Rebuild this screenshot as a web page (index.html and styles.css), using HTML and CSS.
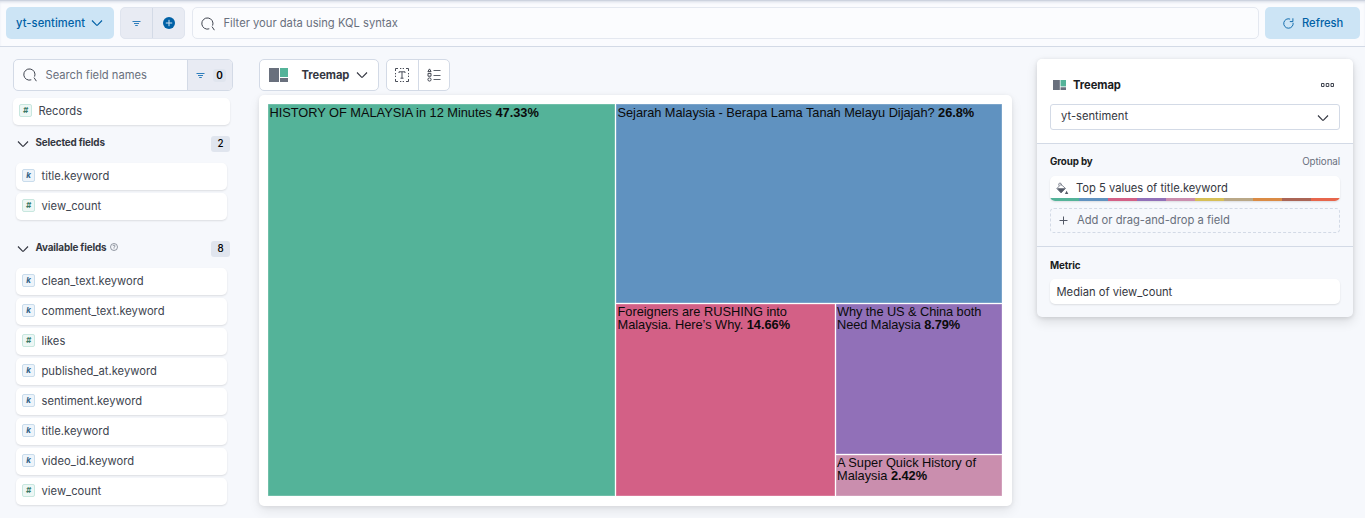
FILE: index.html
```html
<!DOCTYPE html>
<html lang="en">
<head>
<meta charset="utf-8">
<title>Lens</title>
<link rel="stylesheet" href="styles.css">
</head>
<body>
<svg class="defs" aria-hidden="true">
  <symbol id="chev" viewBox="0 0 12 8"><path d="M1 1.5 5.5 6.1Q6 6.5 6.5 6.1L11 1.5" fill="none" stroke="currentColor" stroke-width="1.15"/></symbol>
  <symbol id="search" viewBox="0 0 14 14"><path d="M8.3 11.8A5.6 5.6 0 1 1 11.6 8.6M11 9.6 13.4 13.2" fill="none" stroke="currentColor" stroke-width="1"/></symbol>
  <symbol id="filter" viewBox="0 0 9 7"><path d="M.5 1.5H8.5M2 3.5H7M3.2 5.5H5.8" fill="none" stroke="currentColor" stroke-width=".95"/></symbol>
  <symbol id="treemap" viewBox="0 0 19 14"><path d="M0 0H10V14H0ZM11 10H19V14H11Z" fill="#69707d"/><path d="M11 0H19V9H11Z" fill="#54b399"/></symbol>
</svg>

<header class="topbar">
  <button class="btn view"><span>yt-sentiment</span><svg class="chev"><use href="#chev"/></svg></button>
  <div class="filters">
    <span class="seg"><svg class="filter"><use href="#filter"/></svg></span>
    <span class="seg"><svg width="12" height="12" viewBox="0 0 12 12"><circle cx="6" cy="6" r="6" fill="#0061a6"/><path d="M6 2.8V9.2M2.8 6H9.2" stroke="#d3e2f0" stroke-width="1"/></svg></span>
  </div>
  <div class="query"><svg class="search"><use href="#search"/></svg><span>Filter your data using KQL syntax</span></div>
  <button class="btn refresh"><svg width="11" height="11" viewBox="0 0 11 11"><path d="M7.1 1.1A4.7 4.7 0 1 0 10.1 4.8M6.8 3.6H9.9V.3" fill="none" stroke="currentColor" stroke-width=".9"/></svg><span>Refresh</span></button>
</header>

<div class="main">
  <aside class="sidebar">
    <div class="field-search">
      <div class="field-input"><svg class="search"><use href="#search"/></svg><span>Search field names</span></div>
      <div class="field-filter"><svg class="filter"><use href="#filter"/></svg><b class="count">0</b></div>
    </div>
    <div class="field records"><i class="tok num">#</i><span>Records</span></div>

    <div class="group-head"><svg class="chev"><use href="#chev"/></svg><h2>Selected fields</h2><span class="badge">2</span></div>
    <div class="fields">
      <div class="field"><i class="tok">k</i><span>title.keyword</span></div>
      <div class="field"><i class="tok num">#</i><span>view_count</span></div>
    </div>

    <div class="group-head second"><svg class="chev"><use href="#chev"/></svg><h2>Available fields</h2><svg class="help" width="8" height="8" viewBox="0 0 8 8"><circle cx="4" cy="4" r="3.5"/><path d="M2.9 3.1Q3 2.1 4 2.1T5.1 3.1Q5 3.8 4 4.1V4.8M4 5.4V6.1"/></svg><span class="badge">8</span></div>
    <div class="fields">
      <div class="field"><i class="tok">k</i><span>clean_text.keyword</span></div>
      <div class="field"><i class="tok">k</i><span>comment_text.keyword</span></div>
      <div class="field"><i class="tok num">#</i><span>likes</span></div>
      <div class="field"><i class="tok">k</i><span>published_at.keyword</span></div>
      <div class="field"><i class="tok">k</i><span>sentiment.keyword</span></div>
      <div class="field"><i class="tok">k</i><span>title.keyword</span></div>
      <div class="field"><i class="tok">k</i><span>video_id.keyword</span></div>
      <div class="field"><i class="tok num">#</i><span>view_count</span></div>
    </div>
  </aside>

  <main class="workspace">
    <div class="toolbar">
      <div class="chart-switch"><svg width="19" height="14"><use href="#treemap"/></svg><b>Treemap</b><svg class="chev"><use href="#chev"/></svg></div>
      <div class="tools">
        <span><svg width="14" height="14" viewBox="0 0 14 14" fill="none" stroke="#404550"><path d="M.5 3V.5H3M5 .5H6.3M7.7 .5H9M11 .5H13.5V3M13.5 5V6.3M13.5 7.7V9M13.5 11V13.5H11M9 13.5H7.7M6.3 13.5H5M3 13.5H.5V11M.5 9V7.7M.5 6.3V5M4 5V3.8H10V5M7 3.8V10.2M5.5 10.2H8.5" stroke-width=".95"/></svg></span>
        <span><svg width="14" height="14" viewBox="0 0 14 14" fill="none" stroke="#404550"><path d="M2.5 .9 4.1 3.6H.9ZM1 5.4H4V8.2H1Z" stroke-width="1"/><circle cx="2.5" cy="11.5" r="1.6"/><path d="M6.5 2.5H13.5M6.5 7.5H13.5M6.5 11.5H13.5" stroke-width="1" opacity=".85"/></svg></span>
      </div>
    </div>
    <section class="chart">
      <div class="treemap">
        <div class="tile green">HISTORY OF MALAYSIA in 12 Minutes <b>47.33%</b></div>
        <div class="tile blue">Sejarah Malaysia - Berapa Lama Tanah Melayu Dijajah? <b>26.8%</b></div>
        <div class="tile pink">Foreigners are RUSHING into<br>Malaysia. Here’s Why. <b>14.66%</b></div>
        <div class="tile purple">Why the US &amp; China both<br>Need Malaysia <b>8.79%</b></div>
        <div class="tile mauve">A Super Quick History of<br>Malaysia <b>2.42%</b></div>
      </div>
    </section>
  </main>

  <aside class="config">
    <div class="config-head">
      <div class="layer"><svg width="13" height="10" viewBox="0 0 19 14" preserveAspectRatio="none"><use href="#treemap" width="19" height="14"/></svg><b>Treemap</b><svg class="dots" width="13" height="4" viewBox="0 0 13 4"><path d="M.5 .5H3V3.5H.5ZM5.2 .5H7.8V3.5H5.2ZM10 .5H12.5V3.5H10Z" fill="none" stroke="#404550"/></svg></div>
      <div class="select"><span>yt-sentiment</span><svg class="chev"><use href="#chev"/></svg></div>
    </div>
    <div class="config-section groupby">
      <div class="label"><b>Group by</b><span>Optional</span></div>
      <div class="dim palette">
        <div class="dim-row">
          <svg width="13" height="13" viewBox="0 0 13 13"><path d="M2.8 3.6V1.7Q4 .2 5.2 1.7V3.5M4.7 2.1 9.5 6.4 5 10.9 .8 6.6 4.7 2.6" fill="none" stroke="#69707d" stroke-width=".8"/><path d="M1 6.3H9.6L5.1 10.9Z" fill="#535966"/><path d="M10.6 8.8 12.3 12H8.9Z" fill="#535966"/></svg>
          <span>Top 5 values of title.keyword</span>
        </div>
        <div class="strip"><i></i><i></i><i></i><i></i><i></i><i></i><i></i><i></i><i></i><i></i></div>
      </div>
      <div class="drop"><svg width="9" height="9" viewBox="0 0 9 9"><path d="M4.5 .5V8.5M.5 4.5H8.5" stroke="#535966" stroke-width="1"/></svg><span>Add or drag-and-drop a field</span></div>
    </div>
    <div class="config-section metric">
      <div class="label"><b>Metric</b></div>
      <div class="dim plain"><span>Median of view_count</span></div>
    </div>
  </aside>
</div>
</body>
</html>
```

FILE: styles.css
```css
* { box-sizing: border-box; }
body {
  margin: 0;
  width: 1365px;
  height: 518px;
  overflow: hidden;
  background: #f6f8fc;
  color: #343741;
  font: 11.2px/16px Inter, "Liberation Sans", sans-serif;
}
svg { display: block; flex: none; }
span, b, h2 { white-space: nowrap; }
.defs { position: absolute; width: 0; height: 0; }
.chev { width: 12px; height: 8px; }
.search { width: 14px; height: 14px; color: #404550; }
.filter { width: 9px; height: 7px; color: #2478b8; }

.topbar {
  display: flex;
  height: 47px;
  padding: 7px 5px 7px 6px;
  background: #fafbfe;
  border-bottom: 1px solid #d3dae6;
  box-shadow: inset 0 1px 0 #cdd3df, inset 0 3px 3px -1px #d5dae5;
}
.btn {
  display: flex;
  align-items: center;
  height: 32px;
  border: 0;
  border-radius: 5px;
  background: #cce4f5;
  color: #0061a6;
  font: 500 11.2px/16px Inter, sans-serif;
}
.view { width: 108px; padding: 0 11px 0 10px; justify-content: space-between; }
.view span { letter-spacing: .06px; }
.filters {
  display: flex;
  width: 65px;
  margin: 0 7px 0 6px;
  border: 1px solid #dfe4ee;
  border-radius: 5px;
  background: #e8ebf3;
}
.seg { flex: 1; display: flex; align-items: center; justify-content: center; }
.seg + .seg { border-left: 1px solid #d3dae6; }
.query {
  flex: 1;
  display: flex;
  align-items: center;
  gap: 8px;
  margin-right: 6px;
  padding-left: 8px;
  border: 1px solid #e4e8f0;
  border-radius: 5px;
  background: #fbfcfe;
  color: #69707d;
}
.query .search { margin-top: 2px; }
.query span { margin-left: .4px; }
.refresh { width: 95px; padding: 0 0 0 18px; gap: 8px; }

.main { display: flex; height: 471px; }
.sidebar { width: 259px; padding: 12px 26px 0 13px; }
.field-search {
  display: flex;
  width: 220px;
  height: 32px;
  border: 1px solid #d3dae6;
  border-radius: 5px;
  background: #fbfcfe;
  overflow: hidden;
}
.field-input { flex: 1; display: flex; align-items: center; gap: 8.5px; padding-left: 9px; color: #69707d; }
.field-filter { display: flex; align-items: center; width: 45px; padding-left: 8px; border-left: 1px solid #d3dae6; background: #e8ebf3; }
.count { margin-left: 8px; width: 13px; height: 13px; border-radius: 3px; background: #e0e5ee; color: #000; font-size: 10px; font-weight: 600; line-height: 13px; text-align: center; }
.field {
  display: flex;
  align-items: center;
  height: 27px;
  padding-left: 6px;
  border-radius: 5px;
  background: #fff;
  box-shadow: 0 1px 2px #0000001c;
  color: #404550;
}
.field span { margin: -2px 0 0 6.5px; letter-spacing: .02px; }
.records { width: 217px; margin-top: 7px; }
.tok {
  width: 13px;
  height: 13px;
  margin-top: -2px;
  border: 1px solid #c9dcec;
  border-radius: 2px;
  background: #edf4fa;
  color: #315f86;
  font: italic 700 8px/11px Inter, sans-serif;
  text-align: center;
}
.num { border-color: #c8e7df; background: #edf7f5; color: #387765; }
.group-head { display: flex; align-items: center; width: 217px; height: 16px; margin-top: 11px; padding-left: 4px; }
.group-head h2 { margin: -4px 0 0 6.5px; font: 700 9.9px/16px Inter, sans-serif; letter-spacing: -.16px; }
.second { margin-top: 21px; }
.help { margin: -4px 0 0 4px; fill: none; stroke: #69707d; stroke-width: .7; }
.badge { width: 19px; height: 16px; margin-left: auto; border-radius: 3px; background: #e0e5ee; color: #000; font: 500 9.8px/16px Inter, sans-serif; text-align: center; }
.fields { display: grid; gap: 3px; width: 211px; margin: 11px 0 0 3px; }

.workspace { width: 753px; padding-top: 12px; }
.toolbar { display: flex; gap: 7px; height: 32px; }
.chart-switch, .tools { display: flex; align-items: center; border: 1px solid #d3dae6; border-radius: 5px; background: #fff; }
.chart-switch { width: 120px; padding-left: 9px; }
.chart-switch b { margin: 0 7px 0 13.5px; }
b { font-weight: 700; }
.chart-switch b, .layer b { letter-spacing: -.05px; }
.tools { width: 64px; }
.tools span { flex: 1; height: 30px; display: grid; place-items: center; }
.tools span + span { border-left: 1px solid #d3dae6; }
.chart {
  height: 411px;
  margin-top: 4px;
  padding: 9px 10px 10px 9px;
  border-radius: 5px;
  background: #fff;
  box-shadow: 0 1px 4px #00000014, 0 5px 12px #00000014;
}
.treemap {
  display: grid;
  height: 392px;
  gap: 1px;
  grid-template-columns: 347px 218.5px 166.5px;
  grid-template-rows: 198.5px 150.5px 1fr;
}
.tile {
  padding: 1.5px 0 0 1.5px;
  box-shadow: inset 0 0 0 .5px #ffffff55;
  color: #0b0b0b;
  font: 12.8px/13px "Liberation Sans", Arial, sans-serif;
  letter-spacing: -.02px;
  white-space: nowrap;
}
.green { grid-row: 1 / 4; background: #54b399; }
.blue { grid-column: 2 / 4; background: #6092c0; letter-spacing: -.04px; }
.pink { grid-row: 2 / 4; background: #d36086; }
.purple { background: #9170b8; letter-spacing: -.07px; }
.mauve { background: #ca8eae; }
.pink, .purple { padding-top: 1.2px; }
.mauve { padding-top: .5px; }

.config {
  width: 316px;
  height: 258px;
  margin: 12px 0 0 25px;
  border-radius: 5px;
  background: #f6f8fc;
  box-shadow: 0 1px 4px #0000001c, 0 5px 12px #0000001c;
}
.config-head { height: 85px; padding: 18px 13px 0; background: #fff; border-bottom: 1px solid #d3dae6; border-radius: 5px 5px 0 0; }
.layer { display: flex; align-items: center; height: 16px; padding: 0 6px 0 3px; color: #1a1c21; }
.layer b { margin-left: 7px; }
.dots { margin-left: auto; }
.select { display: flex; align-items: center; justify-content: space-between; height: 26px; margin-top: 11px; padding: 0 10px 2px; border: 1px solid #d3dae6; border-radius: 3px; }
.select .chev { margin-top: 3px; }
.config-section { padding: 10px 13px 0; }
.groupby { height: 103px; border-bottom: 1px solid #d3dae6; }
.label { display: flex; justify-content: space-between; height: 15px; font-size: 9.8px; line-height: 15px; color: #69707d; }
.label span { letter-spacing: -.1px; }
.label b { font-weight: 700; color: #1a1c21; letter-spacing: -.12px; }
.dim { background: #fff; border-radius: 5px; box-shadow: 0 1px 2px #0000001c; }
.palette { height: 25px; margin-top: 7px; overflow: hidden; }
.dim-row { display: flex; align-items: center; gap: 7px; height: 22px; padding: 2px 0 0 6px; }
.strip { display: flex; height: 3px; }
.strip i { flex: 1; background: #54b399; }
.strip i:nth-child(2) { background: #6092c0; }
.strip i:nth-child(3) { background: #d36086; }
.strip i:nth-child(4) { background: #9170b8; }
.strip i:nth-child(5) { background: #ca8eae; }
.strip i:nth-child(6) { background: #d6bf57; }
.strip i:nth-child(7) { background: #b9a888; }
.strip i:nth-child(8) { background: #da8b45; }
.strip i:nth-child(9) { background: #aa6556; }
.strip i:nth-child(10) { background: #e7664c; }
.drop { display: flex; align-items: center; gap: 9px; height: 25px; margin-top: 7px; padding: 0 0 1px 8px; border: 1px dashed #d3dae6; border-radius: 4px; color: #69707d; }
.metric { padding-top: 11px; }
.plain { display: flex; align-items: center; height: 25px; margin-top: 6px; padding: 1px 0 0 6.5px; }
```
